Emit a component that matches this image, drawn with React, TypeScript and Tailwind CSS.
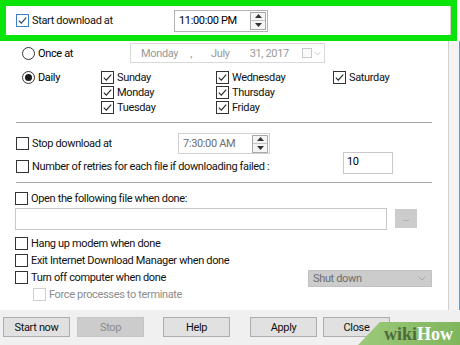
import React from 'react';

function Box({ checked, disabled, blue }: { checked?: boolean; disabled?: boolean; blue?: boolean }) {
  const border = blue ? 'border-[#3d7fc2]' : disabled ? 'border-[#d0d0d0]' : 'border-[#333333]';
  return (
    <span className={`w-[13px] h-[13px] shrink-0 border ${border} bg-white flex items-center justify-center`}>
      {checked && (
        <svg width="11" height="11" viewBox="0 0 11 11">
          <path d="M1.8 5.6 L4.3 8.1 L9.2 2.6" fill="none" stroke={blue ? '#1d3f66' : '#222222'} strokeWidth="1.1" />
        </svg>
      )}
    </span>
  );
}

function Radio({ on }: { on?: boolean }) {
  return (
    <span className="w-[13px] h-[13px] shrink-0 rounded-full border border-[#333333] bg-white flex items-center justify-center">
      {on && <span className="w-[7px] h-[7px] rounded-full bg-[#1a1a1a]" />}
    </span>
  );
}

function Check({ label, checked, disabled, blue }: { label: string; checked?: boolean; disabled?: boolean; blue?: boolean }) {
  return (
    <span className="flex items-center gap-[3px] whitespace-nowrap">
      <Box checked={checked} disabled={disabled} blue={blue} />
      <span className={disabled ? 'text-[#8c8c8c]' : 'text-[#111111]'}>{label}</span>
    </span>
  );
}

function Spin() {
  return (
    <span className="w-[16px] h-[18px] border border-[#a8a8a8] flex flex-col bg-[#f5f5f5]">
      <span className="flex-1 flex items-center justify-center border-b border-[#c4c4c4]">
        <svg width="7" height="4" viewBox="0 0 7 4"><path d="M0 4 L3.5 0 L7 4Z" fill="#333333" /></svg>
      </span>
      <span className="flex-1 flex items-center justify-center">
        <svg width="7" height="4" viewBox="0 0 7 4"><path d="M0 0 L3.5 4 L7 0Z" fill="#333333" /></svg>
      </span>
    </span>
  );
}

function Btn({ label, disabled, cls }: { label: string; disabled?: boolean; cls: string }) {
  return (
    <div
      className={`${cls} w-[67px] h-[20px] border flex items-center justify-center ${
        disabled ? 'bg-[#cccccc] border-[#c4c4c4] text-[#8a8a8a]' : 'bg-[#e1e1e1] border-[#adadad] text-[#111111]'
      }`}
    >
      {label}
    </div>
  );
}

export default function App() {
  return (
    <div className="w-[460px] h-[345px] overflow-hidden relative bg-[#f0f0f0] flex flex-col font-['Roboto',sans-serif] text-[11px] tracking-[-0.35px] leading-none">
      {/* Top highlighted row */}
      <div className="flex h-[41px] shrink-0 bg-white">
        <div className="w-[457px] h-[41px] border-[6px] border-[#0ae40a] flex items-center">
          <div className="flex-1 h-full flex items-center bg-white border-r border-[#d0d0d0]">
            <div className="w-[168px] pl-[10px]">
              <Check label="Start download at" checked blue />
            </div>
            <div className="w-[94px] h-[22px] border border-[#b4b4b4] flex items-center justify-between pl-[4px] pr-[1px] bg-white whitespace-nowrap">
              <span>11:00:00 PM</span>
              <Spin />
            </div>
          </div>
        </div>
      </div>

      {/* Middle panel */}
      <div className="flex h-[269px] shrink-0">
        <div className="w-[449px] h-full bg-white border-r border-[#cfcfcf] flex flex-col">
          {/* Once at */}
          <div className="flex items-center h-[20px] mt-[2px]">
            <div className="w-[130px] pl-[22px] flex items-center gap-[3px]">
              <Radio />
              <span>Once at</span>
            </div>
            <div className="w-[195px] h-[20px] border border-[#d9d9d9] flex items-center text-[#999999] bg-white whitespace-nowrap">
              <span className="ml-[10px]">Monday</span>
              <span className="ml-[12px]">,</span>
              <span className="ml-[19px]">July</span>
              <span className="ml-[20px]">31, 2017</span>
              <span className="ml-[13px] w-[10px] h-[10px] border border-[#c8c8c8] bg-[#fafafa] shrink-0" />
              <svg className="ml-[2px] shrink-0" width="7" height="5" viewBox="0 0 7 5"><path d="M0.5 1 L3.5 4 L6.5 1" fill="none" stroke="#c8c8c8" strokeWidth="1" /></svg>
            </div>
          </div>

          {/* Daily */}
          <div className="flex mt-[7px]">
            <div className="w-[101px] pl-[22px] h-[15px] flex items-center gap-[3px]">
              <Radio on />
              <span>Daily</span>
            </div>
            <div className="grid grid-cols-[115px_117px_100px] grid-rows-[15px_15px_15px] items-center">
              <Check label="Sunday" checked />
              <Check label="Wednesday" checked />
              <Check label="Saturday" checked />
              <Check label="Monday" checked />
              <Check label="Thursday" checked />
              <span />
              <Check label="Tuesday" checked />
              <Check label="Friday" checked />
            </div>
          </div>

          <div className="ml-[16px] w-[416px] h-px bg-[#a6a6a6] mt-[7px]" />

          {/* Stop download */}
          <div className="flex items-center h-[21px] mt-[10px]">
            <div className="w-[178px] pl-[16px]">
              <Check label="Stop download at" />
            </div>
            <div className="w-[92px] h-[21px] border border-[#d0d0d0] flex items-center justify-between pl-[4px] pr-[1px] text-[#6d6d6d] whitespace-nowrap">
              <span>7:30:00 AM</span>
              <Spin />
            </div>
          </div>

          {/* Retries */}
          <div className="flex items-start h-[22px] mt-[-2px]">
            <div className="w-[343px] pl-[16px] mt-[7px] h-[14px] flex items-center">
              <Check label="Number of retries for each file if downloading failed :" />
            </div>
            <div className="w-[50px] h-[22px] border border-[#c8c8c8] pl-[3px] pt-[3px] bg-white">10</div>
          </div>

          <div className="ml-[16px] w-[416px] h-px bg-[#a6a6a6] mt-[8px]" />

          {/* Open file */}
          <div className="h-[14px] mt-[8px] pl-[15px] flex items-center">
            <Check label="Open the following file when done:" />
          </div>
          <div className="flex mt-[3px]">
            <div className="ml-[15px] w-[372px] h-[22px] border border-[#c8c8c8] bg-white" />
            <div className="ml-[8px] mt-[1px] w-[22px] h-[19px] bg-[#cccccc] flex items-center justify-center text-[#8a8a8a] text-[9px]">...</div>
          </div>

          <div className="h-[14px] mt-[6px] pl-[15px] flex items-center">
            <Check label="Hang up modem when done" />
          </div>
          <div className="h-[14px] mt-[3px] pl-[15px] flex items-center">
            <Check label="Exit Internet Download Manager when done" />
          </div>
          <div className="flex h-[17px] mt-[3px]">
            <div className="w-[308px] pl-[15px] h-[14px] flex items-center">
              <Check label="Turn off computer when done" />
            </div>
            <div className="w-[124px] h-[17px] bg-[#cccccc] border border-[#c2c2c2] flex items-center justify-between pl-[4px] pr-[5px] text-[#6d6d6d]">
              <span>Shut down</span>
              <svg width="8" height="5" viewBox="0 0 8 5"><path d="M0.5 0.5 L4 4 L7.5 0.5" fill="none" stroke="#a8a8a8" strokeWidth="1" /></svg>
            </div>
          </div>
          <div className="h-[14px] pl-[33px] flex items-center">
            <Check label="Force processes to terminate" disabled />
          </div>
        </div>
        <div className="flex-1 h-full bg-[#f3f3f3] flex justify-end">
          <div className="w-px h-full bg-[#5a9bd0]" />
        </div>
      </div>

      {/* Bottom buttons */}
      <div className="flex mt-[7px]">
        <Btn label="Start now" cls="ml-[3px]" />
        <Btn label="Stop" disabled cls="ml-[7px]" />
        <Btn label="Help" cls="ml-[19px]" />
        <Btn label="Apply" cls="ml-[20px]" />
        <Btn label="Close" cls="ml-[6px]" />
      </div>

      {/* wikiHow watermark */}
      <div className="absolute left-[358px] top-[322px] w-[102px] h-[23px] bg-gradient-to-r from-[#9cc97a] to-[#7fb65c] [clip-path:polygon(22px_0,100%_0,100%_100%,0_100%)]" />
      <div className="absolute left-[384px] top-[325px] font-['Liberation_Serif',serif] font-bold text-[18px] tracking-normal leading-none">
        <span className="text-[#4f6a3c]">wiki</span>
        <span className="text-white">How</span>
      </div>
    </div>
  );
}
